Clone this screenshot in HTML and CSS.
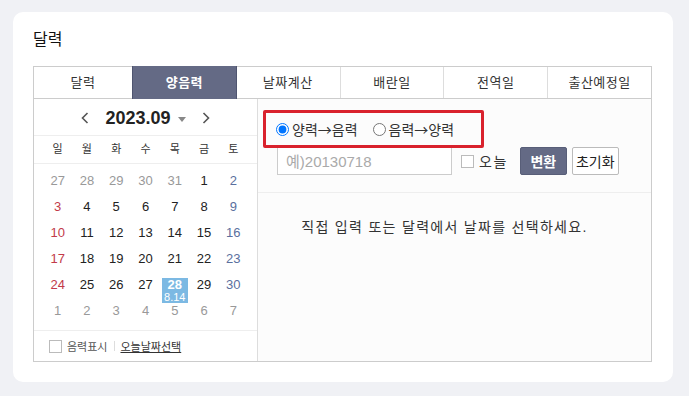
FILE: index.html
```html
<!DOCTYPE html>
<html lang="ko">
<head>
<meta charset="UTF-8" />
<meta name="viewport" content="width=device-width, initial-scale=1" />
<title>달력</title>
<link rel="stylesheet" href="styles.css">
</head>
<body>
  <div class="card">
    <h2 class="card-title">달력</h2>

    <ul class="tabs">
      <li class="tab">달력</li>
      <li class="tab active">양음력</li>
      <li class="tab">날짜계산</li>
      <li class="tab">배란일</li>
      <li class="tab">전역일</li>
      <li class="tab">출산예정일</li>
    </ul>

    <div class="tab-body">
      <div class="calendar">
        <div class="cal-head">
          <button class="arrow" aria-label="이전달">
            <svg width="8" height="12" viewBox="0 0 8 12"><polyline points="6.5,1 1.5,6 6.5,11" fill="none" stroke="#555" stroke-width="1.6"/></svg>
          </button>
          <span class="month">2023.09</span>
          <span class="caret"></span>
          <button class="arrow" aria-label="다음달">
            <svg width="8" height="12" viewBox="0 0 8 12"><polyline points="1.5,1 6.5,6 1.5,11" fill="none" stroke="#555" stroke-width="1.6"/></svg>
          </button>
        </div>

        <div class="week">
          <span>일</span><span>월</span><span>화</span><span>수</span><span>목</span><span>금</span><span>토</span>
        </div>

        <div class="days">
          <span class="other">27</span><span class="other">28</span><span class="other">29</span><span class="other">30</span><span class="other">31</span><span>1</span><span class="sat">2</span>
          <span class="sun">3</span><span>4</span><span>5</span><span>6</span><span>7</span><span>8</span><span class="sat">9</span>
          <span class="sun">10</span><span>11</span><span>12</span><span>13</span><span>14</span><span>15</span><span class="sat">16</span>
          <span class="sun">17</span><span>18</span><span>19</span><span>20</span><span>21</span><span>22</span><span class="sat">23</span>
          <span class="sun">24</span><span>25</span><span>26</span><span>27</span><span class="today"><b class="sel">28<small>8.14</small></b></span><span>29</span><span class="sat">30</span>
          <span class="other">1</span><span class="other">2</span><span class="other">3</span><span class="other">4</span><span class="other">5</span><span class="other">6</span><span class="other">7</span>
        </div>

        <div class="cal-foot">
          <label class="lunar"><span class="box"></span>음력표시</label>
          <span class="bar"></span>
          <a class="today-link" href="#">오늘날짜선택</a>
        </div>
      </div>

      <div class="convert">
        <div class="convert-top">
          <div class="mode">
            <label class="radio"><input type="radio" name="mode" checked>양력→음력</label>
            <label class="radio"><input type="radio" name="mode">음력→양력</label>
          </div>
          <div class="input-row">
            <input class="date-input" type="text" placeholder="예)20130718">
            <label class="today-check"><span class="box"></span>오늘</label>
            <button class="btn primary">변환</button>
            <button class="btn">초기화</button>
          </div>
        </div>
        <p class="message">직접 입력 또는 달력에서 날짜를 선택하세요.</p>
      </div>
    </div>
  </div>
</body>
</html>
```

FILE: styles.css
```css
* {
  margin: 0;
  padding: 0;
  box-sizing: border-box;
}

body {
  background: #f0f1f5;
  font-family: "Liberation Sans", "Noto Sans CJK KR", sans-serif;
  color: #222;
  padding: 12px 0 0 13px;
}

.card {
  width: 660px;
  height: 370px;
  background: #fff;
  border-radius: 10px;
  padding: 18px 20px 0 20px;
}

.card-title {
  font-size: 16px;
  font-weight: normal;
  line-height: 20px;
  margin-bottom: 16px;
  color: #111;
}

/* tabs */
.tabs {
  list-style: none;
  display: grid;
  grid-template-columns: 98px repeat(5, 1fr);
  width: 619px;
  height: 33px;
  border: 1px solid #ccc;
}

.tab {
  font-size: 13px;
  line-height: 31px;
  text-align: center;
  color: #333;
  border-left: 1px solid #ddd;
  letter-spacing: 0.5px;
}

.tab:first-child {
  border-left: none;
}

.tab.active {
  background: #646a85;
  color: #fff;
  font-weight: bold;
  margin: -1px -1px -1px 0;
  line-height: 33px;
  border-left: 1px solid #4f5570;
  border-right: 1px solid #4f5570;
}

.tab.active + .tab {
  border-left: none;
}

.tab-body {
  display: flex;
  width: 619px;
  height: 263px;
  border: 1px solid #ccc;
  border-top: none;
}

/* calendar */
.calendar {
  width: 224px;
  border-right: 1px solid #ddd;
  display: flex;
  flex-direction: column;
}

.cal-head {
  height: 37px;
  border-bottom: 1px solid #eee;
  display: flex;
  align-items: center;
  justify-content: center;
  padding-top: 2px;
}

.arrow {
  background: none;
  border: none;
  width: 16px;
  height: 16px;
  display: flex;
  align-items: center;
  justify-content: center;
}

.month {
  font-size: 18px;
  font-weight: bold;
  color: #222;
  margin-left: 12px;
}

.caret {
  width: 0;
  height: 0;
  border-left: 4px solid transparent;
  border-right: 4px solid transparent;
  border-top: 5px solid #888;
  margin: 2px 12px 0 7px;
}

.week,
.days {
  display: grid;
  grid-template-columns: repeat(7, 1fr);
  padding: 0 9px;
}

.week {
  height: 28px;
  border-bottom: 1px solid #eee;
  font-size: 11px;
  line-height: 27px;
  text-align: center;
  color: #333;
}

.days {
  grid-auto-rows: 26px;
  padding-top: 4px;
  padding-bottom: 6px;
  font-size: 13px;
  line-height: 26px;
  text-align: center;
  color: #222;
}

.days .other { color: #999; }
.days .sun { color: #c23a4a; }
.days .sat { color: #5a6f9e; }

.sel {
  display: inline-block;
  vertical-align: top;
  width: 26px;
  margin-top: 6px;
  background: #7cb9e3;
  color: #fff;
  font-size: 13px;
  line-height: 13px;
}

.sel small {
  display: block;
  font-size: 11px;
  font-weight: normal;
  line-height: 12px;
}

.cal-foot {
  flex: 1;
  border-top: 1px solid #eee;
  display: flex;
  align-items: center;
  padding-left: 15px;
  font-size: 11px;
}

.box {
  display: inline-block;
  width: 13px;
  height: 13px;
  border: 1px solid #bbb;
  background: #fff;
}

.lunar {
  display: flex;
  align-items: center;
  gap: 5px;
  color: #555;
}

.bar {
  width: 1px;
  height: 10px;
  background: #ddd;
  margin: 0 5px 0 7px;
}

.today-link {
  color: #333;
  text-decoration: underline;
}

/* converter */
.convert {
  flex: 1;
  background: #fcfcfc;
}

.convert-top {
  padding: 11px 0 17px 0;
  border-bottom: 1px solid #eee;
}

.mode {
  width: 221px;
  height: 38px;
  margin-left: 5px;
  border: 3px solid #d9222d;
  border-radius: 2px;
  display: flex;
  align-items: center;
  padding-left: 10px;
  gap: 15px;
  position: relative;
  z-index: 1;
}

.radio {
  display: flex;
  align-items: center;
  font-family: "Noto Sans CJK KR", sans-serif;
  font-size: 14px;
  color: #333;
}

.radio input {
  width: 13px;
  height: 13px;
  margin: 0 3px 0 0;
}

.input-row {
  display: flex;
  align-items: center;
  margin-top: -1px;
  padding-left: 19px;
}

.date-input {
  width: 175px;
  height: 28px;
  border: 1px solid #ccc;
  background: #fff;
  padding-left: 8px;
  font-family: "Liberation Sans", "Noto Sans CJK KR", sans-serif;
  font-size: 15px;
  color: #333;
}

.date-input::placeholder {
  color: #aaa;
}

.today-check {
  display: flex;
  align-items: center;
  gap: 5px;
  margin-left: 9px;
  font-size: 14px;
  letter-spacing: 1.5px;
  color: #333;
}

.btn {
  height: 28px;
  width: 47px;
  border: 1px solid #bbb;
  border-radius: 2px;
  background: #fff;
  font-family: "Liberation Sans", "Noto Sans CJK KR", sans-serif;
  font-size: 14px;
  color: #222;
  margin-left: 5px;
}

.btn.primary {
  background: #646a85;
  border-color: #585e78;
  color: #fff;
  font-weight: bold;
  margin-left: 12px;
}

.message {
  font-size: 14px;
  letter-spacing: 1.3px;
  color: #333;
  text-align: center;
  padding: 23px 20px 0 0;
}
```
